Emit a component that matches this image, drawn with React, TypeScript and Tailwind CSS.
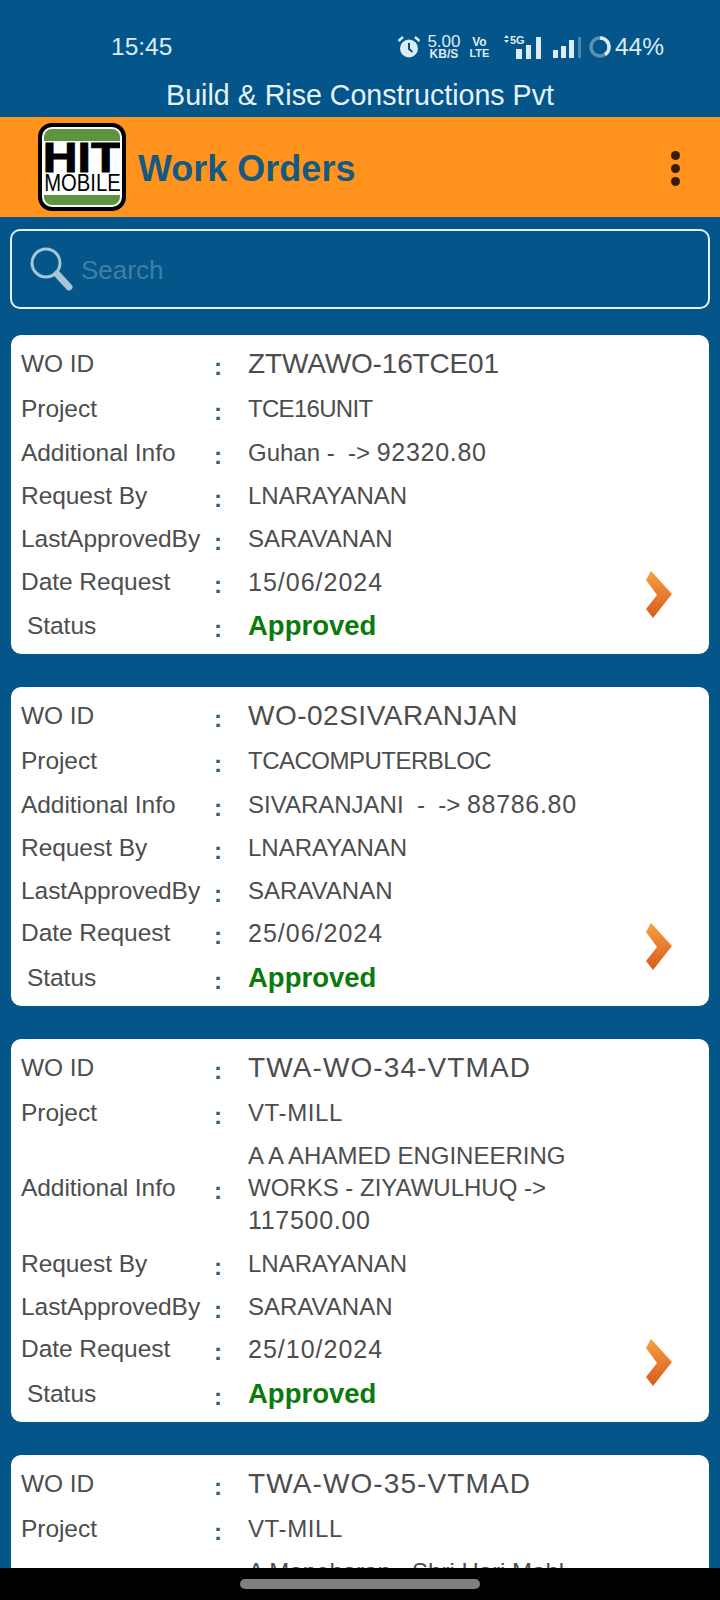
import type { ReactNode } from 'react';

const FONT = "font-['Liberation_Sans',Arial,sans-serif]";

interface Order {
  id: string;
  idClass: string;
  project: string;
  projectClass: string;
  info: ReactNode;
  date: string;
}

const amount = 'text-[25px] tracking-[0.7px]';

const orders: Order[] = [
  {
    id: 'ZTWAWO-16TCE01',
    idClass: 'tracking-[-0.15px]',
    project: 'TCE16UNIT',
    projectClass: 'tracking-[-0.7px]',
    info: <>Guhan -  -&gt; <span className={amount}>92320.80</span></>,
    date: '15/06/2024',
  },
  {
    id: 'WO-02SIVARANJAN',
    idClass: 'tracking-[0.5px]',
    project: 'TCACOMPUTERBLOC',
    projectClass: 'tracking-[-0.5px]',
    info: <>SIVARANJANI  -  -&gt; <span className={amount}>88786.80</span></>,
    date: '25/06/2024',
  },
  {
    id: 'TWA-WO-34-VTMAD',
    idClass: 'tracking-[1.1px]',
    project: 'VT-MILL',
    projectClass: 'tracking-[0.6px]',
    info: (
      <>
        A A AHAMED ENGINEERING
        <br />
        WORKS - ZIYAWULHUQ -&gt;
        <br />
        <span className={amount}>117500.00</span>
      </>
    ),
    date: '25/10/2024',
  },
  {
    id: 'TWA-WO-35-VTMAD',
    idClass: 'tracking-[1.1px]',
    project: 'VT-MILL',
    projectClass: 'tracking-[0.6px]',
    info: (
      <>
        A Manoharan - Shri Hari Mahl
        <br />
        &nbsp;
      </>
    ),
    date: '25/10/2024',
  },
];

function Row({ label, children, rowClass = 'py-[5.4px]', valueClass = 'text-[24px]', indent = false }: { label: string; children: ReactNode; rowClass?: string; valueClass?: string; indent?: boolean }) {
  return (
    <div className={`grid grid-cols-[193px_34px_1fr] items-center ${rowClass}`}>
      <div className={`text-[24.5px] leading-[30px] tracking-[-0.05px] text-[#4d4d4d] whitespace-nowrap ${indent ? 'pl-[6px]' : ''}`}>{label}</div>
      <div className="text-[24px] font-bold leading-[30px] text-[#2a5f78] translate-y-[3px]">:</div>
      <div className={`leading-[32px] whitespace-pre ${valueClass}`}>{children}</div>
    </div>
  );
}

function Chevron() {
  return (
    <svg width="28" height="47" viewBox="0 0 28 47" className="mb-[31px] shrink-0">
      <defs>
        <linearGradient id="chev" x1="0" y1="0" x2="0" y2="1">
          <stop offset="0" stopColor="#f4a13f" />
          <stop offset="1" stopColor="#d95a1c" />
        </linearGradient>
      </defs>
      <path d="M6 0 L27 23 L8 47 L1 38 L12 24 L1 9 Z" fill="url(#chev)" />
    </svg>
  );
}

function OrderCard({ order }: { order: Order }) {
  return (
    <div className="bg-white rounded-[10px] pl-[10px] pr-[36px] pt-[5px] pb-[5px] flex items-end justify-between text-[#4d4d4d]">
      <div className="flex-1">
        <Row label="WO ID" rowClass="py-[8px]" valueClass={`text-[28px] ${order.idClass}`}>{order.id}</Row>
        <Row label="Project" valueClass={`text-[24px] ${order.projectClass}`}>{order.project}</Row>
        <Row label="Additional Info">{order.info}</Row>
        <Row label="Request By">LNARAYANAN</Row>
        <Row label="LastApprovedBy">SARAVANAN</Row>
        <Row label="Date Request" valueClass="text-[25px] tracking-[1px]">{order.date}</Row>
        <Row label="Status" indent rowClass="py-[7px]" valueClass="text-[27.5px] font-bold text-[#0b7a0b]">Approved</Row>
      </div>
      <Chevron />
    </div>
  );
}

function StatusBar() {
  return (
    <div className="h-[76px] pt-[30px] pl-[111px] pr-[56px] flex items-start justify-between text-[#dcebf4]">
      <span className="text-[24.5px] leading-[34px]">15:45</span>
      <div className="flex items-center h-[34px]">
        <svg width="24" height="24" viewBox="0 0 24 24" className="mr-[6px]">
          <circle cx="12" cy="13.5" r="9" fill="#dcebf4" />
          <path d="M12 8v6l3.5 3" stroke="#03558a" strokeWidth="2" fill="none" />
          <path d="M1.5 6L6 2M22.5 6L18 2" stroke="#dcebf4" strokeWidth="2.4" />
        </svg>
        <div className="flex flex-col items-center w-[34px] mr-[7px] font-bold">
          <span className="text-[17px] leading-[14px] font-normal">5.00</span>
          <span className="text-[12px] leading-[11px]">KB/S</span>
        </div>
        <div className="flex flex-col items-center w-[23px] mr-[12px] font-bold">
          <span className="text-[12px] leading-[12px]">Vo</span>
          <span className="text-[11px] leading-[11px]">LTE</span>
        </div>
        <svg width="41" height="26" viewBox="0 0 41 26" className="mr-[8px]">
          <path d="M1 4l2.5-3 2.5 3zM1 6l2.5 3 2.5-3z" fill="#dcebf4" />
          <text x="7" y="10" fontSize="11" fontWeight="700" fill="#dcebf4" fontFamily="Liberation Sans">5G</text>
          <rect x="13" y="15" width="6" height="10" fill="#dcebf4" />
          <rect x="23" y="11" width="5" height="14" fill="#dcebf4" />
          <rect x="33" y="3" width="5" height="22" fill="#dcebf4" />
        </svg>
        <svg width="30" height="24" viewBox="0 0 30 24" className="mr-[6px]">
          <rect x="1" y="15" width="5" height="8" fill="#dcebf4" />
          <rect x="9" y="11" width="5" height="12" fill="#dcebf4" />
          <rect x="17" y="5" width="5" height="18" fill="#dcebf4" />
          <rect x="26" y="2" width="3" height="21" fill="#4d85a9" />
        </svg>
        <svg width="24" height="24" viewBox="0 0 24 24" className="mr-[3px]">
          <circle cx="12" cy="12" r="9" fill="none" stroke="#5d90b1" strokeWidth="3.5" />
          <path d="M12 3a9 9 0 0 1 5 16.5" fill="none" stroke="#dcebf4" strokeWidth="3.5" />
        </svg>
        <span className="text-[24.5px] leading-[34px]">44%</span>
      </div>
    </div>
  );
}

function Logo() {
  return (
    <div className="w-[88px] h-[88px] rounded-[14px] border-[4px] border-black bg-white p-[2px] flex flex-col overflow-hidden shrink-0">
      <div className="h-[12px] bg-[#5e9440] rounded-t-[8px] shrink-0" />
      <div className="flex-1 flex flex-col items-center overflow-hidden">
        <span className="text-[43px] leading-[32px] h-[32px] font-bold text-black scale-x-[1.12] [-webkit-text-stroke:1px_black]">HIT</span>
        <span className="text-[23px] leading-[20px] text-black scale-x-[0.88] whitespace-nowrap">MOBILE</span>
      </div>
      <div className="h-[10px] bg-[#5e9440] rounded-b-[8px] shrink-0" />
    </div>
  );
}

export default function App() {
  return (
    <div className={`${FONT} w-[720px] h-[1600px] bg-[#03558a] flex flex-col overflow-hidden`}>
      <StatusBar />
      <div className="h-[41px] text-center text-[28.6px] leading-[38px] text-[#e6f2f8]">Build &amp; Rise Constructions Pvt</div>

      {/* header */}
      <div className="h-[100px] bg-[#ff931e] flex items-center pl-[38px] pr-[40px] shrink-0">
        <Logo />
        <h1 className="ml-[12px] pt-[3px] text-[36px] font-bold text-[#16597f]">Work Orders</h1>
        <div className="ml-auto flex flex-col gap-[4px] pt-[2px]">
          <span className="w-[9px] h-[9px] rounded-full bg-[#3a1c0c]" />
          <span className="w-[9px] h-[9px] rounded-full bg-[#3a1c0c]" />
          <span className="w-[9px] h-[9px] rounded-full bg-[#3a1c0c]" />
        </div>
      </div>

      {/* search */}
      <div className="px-[10px] pt-[12px] shrink-0">
        <div className="h-[80px] rounded-[10px] border-2 border-[#e3f1f8] flex items-center pl-[16px]">
          <svg width="46" height="50" viewBox="0 0 46 50">
            <circle cx="18" cy="19" r="14" fill="none" stroke="#a6c6d8" strokeWidth="3" />
            <path d="M29 30 L41 43" stroke="#a6c6d8" strokeWidth="7" strokeLinecap="round" />
          </svg>
          <span className="ml-[7px] pt-[3px] text-[26px] text-[#3f7fa6]">Search</span>
        </div>
      </div>

      {/* list */}
      <div className="flex-1 min-h-0 overflow-hidden px-[11px] pt-[26px] flex flex-col gap-[33px]">
        {orders.map(order => (
          <div key={order.id} className="shrink-0">
            <OrderCard order={order} />
          </div>
        ))}
      </div>

      {/* nav bar */}
      <div className="h-[32px] bg-black flex items-center justify-center shrink-0">
        <div className="w-[240px] h-[10px] rounded-full bg-[#808080]" />
      </div>
    </div>
  );
}
